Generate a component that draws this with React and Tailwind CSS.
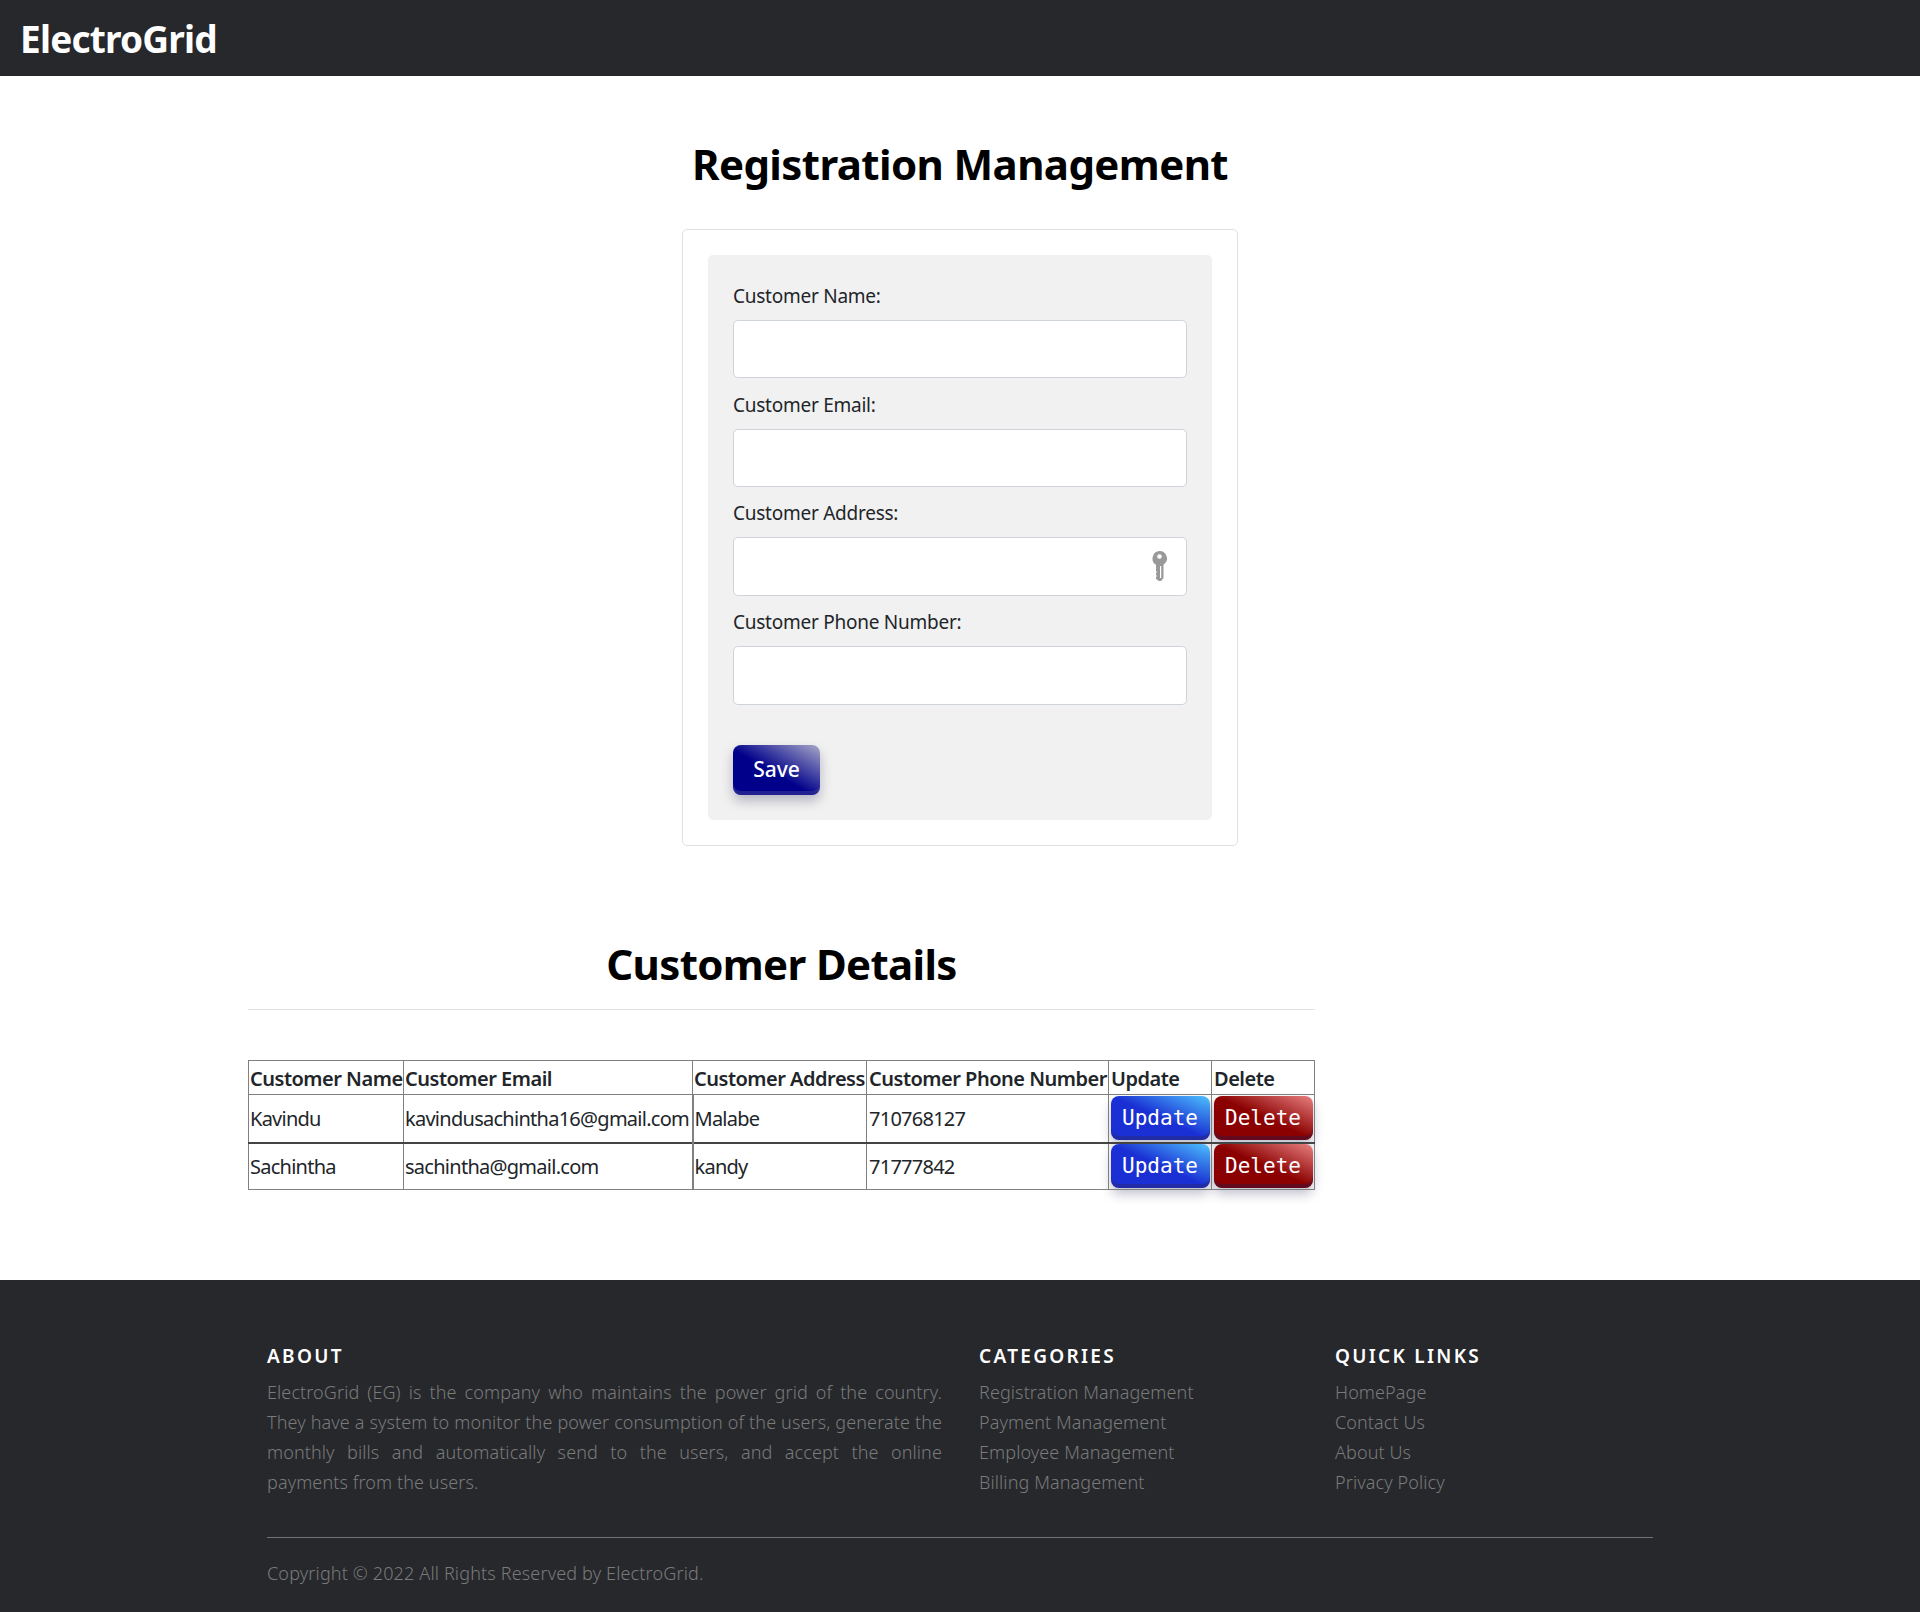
const columns = [
  { label: 'Customer Name', width: 'w-[155px]', pad: 'pl-[1px]' },
  { label: 'Customer Email', width: 'w-[289px]', pad: 'pl-[1px]' },
  { label: 'Customer Address', width: 'w-[174px]', pad: 'pl-[1px]' },
  { label: 'Customer Phone Number', width: 'w-[242px]', pad: 'pl-[2px]' },
  { label: 'Update', width: 'w-[103px]', pad: 'pl-[2px]' },
  { label: 'Delete', width: 'w-[103px]', pad: 'pl-[2px]' },
];

const customers = [
  { name: 'Kavindu', email: 'kavindusachintha16@gmail.com', address: 'Malabe', phone: '710768127' },
  { name: 'Sachintha', email: 'sachintha@gmail.com', address: 'kandy', phone: '71777842' },
];

const categories = ['Registration Management', 'Payment Management', 'Employee Management', 'Billing Management'];
const quickLinks = ['HomePage', 'Contact Us', 'About Us', 'Privacy Policy'];

function Field({ label, icon }) {
  return (
    <div className="mb-[12.35px]">
      <label className="block h-[28px] leading-[28px] mb-[10px] text-[19px] tracking-[-0.25px] text-[#212529]">{label}</label>
      <div className="relative">
        <input type="text" className="block w-full h-[58.4px] bg-white border border-[#ced4da] rounded-[5px]" />
        {icon && (
          <svg viewBox="0 0 15 30" className="absolute right-[20px] top-[14px] w-[15px] h-[30px]" fill="#999">
            <path fillRule="evenodd" d="M7.5 0a7.5 7.5 0 0 1 4 13.8V27l-2.5 3H7l-3-2v-2l1-1-1-1v-2l1-1-1-1v-6.2A7.5 7.5 0 0 1 7.5 0zm0 3.2a2.3 2.3 0 1 0 0 4.6 2.3 2.3 0 0 0 0-4.6zM8 15v12h1.2V15z" />
          </svg>
        )}
      </div>
    </div>
  );
}

function FooterColumn({ title, items, className }) {
  return (
    <div className={className}>
      <h6 className="text-[19px] leading-[22px] font-semibold tracking-[2.3px] text-white mb-[10px]">{title}</h6>
      <ul>
        {items.map((item) => (
          <li key={item} className="h-[30px] leading-[30px] text-[18px] font-light tracking-[0.1px] text-[#7a7a7a]">{item}</li>
        ))}
      </ul>
    </div>
  );
}

export default function App() {
  return (
    <div className="w-full min-h-[1612px] bg-white font-['Noto_Sans',sans-serif] text-[#212529]">
      <nav className="h-[76px] bg-[#26282c] flex items-center pl-[20px] pt-[2px]">
        <span className="text-[37px] font-bold tracking-[-0.8px] text-white">ElectroGrid</span>
      </nav>

      <h1 className="mt-[60px] h-[55px] leading-[55px] text-center text-[42px] font-bold tracking-[-0.6px] text-black">Registration Management</h1>

      <div className="mt-[38px] mx-auto w-[556px] h-[617px] p-[25px] bg-white border border-[#dee2e6] rounded-[5px]">
        <form className="h-full px-[25px] pt-[27px] bg-[#f1f1f1] rounded-[5px]">
          <Field label="Customer Name:" />
          <Field label="Customer Email:" />
          <Field label="Customer Address:" icon />
          <Field label="Customer Phone Number:" />
          <button type="button" className="mt-[28px] w-[87px] h-[50px] rounded-[8px] text-[21px] font-medium text-white bg-[linear-gradient(to_top_right,#00008b_45%,#a8a8c8)] shadow-[inset_0_-4px_0_rgba(70,70,150,0.45),0_6px_12px_rgba(0,0,60,0.25)]">Save</button>
        </form>
      </div>

      <div className="ml-[248px] w-[1067px]">
        <h1 className="mt-[90px] h-[55px] leading-[55px] text-center text-[42px] font-bold tracking-[-0.65px] text-black">Customer Details</h1>
        <hr className="mt-[18px] border-[#e2e2e2]" />
        <table className="mt-[50px] w-[1066px] table-fixed border-collapse text-[20px]">
          <thead>
            <tr className="h-[34px]">
              {columns.map((col) => (
                <th key={col.label} className={`${col.width} ${col.pad} pt-[2px] border border-[#808080] text-left font-semibold leading-[24px] tracking-[-0.5px] whitespace-nowrap overflow-hidden`}>{col.label}</th>
              ))}
            </tr>
          </thead>
          <tbody>
            {customers.map((row, i) => (
              <tr key={row.name} className={i === 0 ? 'h-[48px] border-b-2 border-[#444]' : 'h-[47px]'}>
                <td className="border-x border-b border-[#808080] pl-[1px] pt-[2px] tracking-[-0.75px]">{row.name}</td>
                <td className="border-l border-r-2 border-b border-[#808080] pl-[1px] pt-[2px] tracking-[-0.73px] whitespace-nowrap">{row.email}</td>
                <td className="border-x border-b border-[#808080] pl-[1px] pt-[2px] tracking-[-0.75px]">{row.address}</td>
                <td className="border-x border-b border-[#808080] pl-[2px] pt-[2px] tracking-[-0.75px]">{row.phone}</td>
                <td className="border-x border-b border-[#808080] p-0 text-center">
                  <button type="button" className="block mx-auto w-[99px] h-[44px] rounded-[8px] font-['DejaVu_Sans_Mono',monospace] text-[21px] text-white bg-[linear-gradient(to_top_right,#1a30d4_50%,#4fc3ff)] shadow-[inset_0_-4px_0_rgba(40,40,120,0.5),0_6px_12px_rgba(0,0,60,0.25)]">Update</button>
                </td>
                <td className="border-x border-b border-[#808080] p-0 text-center">
                  <button type="button" className="block mx-auto w-[99px] h-[44px] rounded-[8px] font-['DejaVu_Sans_Mono',monospace] text-[21px] text-white bg-[linear-gradient(to_top_right,#8b0000_50%,#e88080)] shadow-[inset_0_-4px_0_rgba(60,20,60,0.5),0_6px_12px_rgba(0,0,60,0.25)]">Delete</button>
                </td>
              </tr>
            ))}
          </tbody>
        </table>
      </div>

      <footer className="mt-[90px] h-[332px] bg-[#26282c] px-[267px] pt-[65px]">
        <div className="flex">
          <div className="w-[675px]">
            <h6 className="text-[19px] leading-[22px] font-semibold tracking-[2.3px] text-white mb-[10px]">ABOUT</h6>
            <p className="text-[18px] leading-[30px] font-light tracking-[0.1px] text-[#7a7a7a] text-justify">
              ElectroGrid (EG) is the company who maintains the power grid of the country. They have a system to monitor the power consumption of the users, generate the monthly bills and automatically send to the users, and accept the online payments from the users.
            </p>
          </div>
          <FooterColumn title="CATEGORIES" items={categories} className="ml-[37px] w-[356px]" />
          <FooterColumn title="QUICK LINKS" items={quickLinks} />
        </div>
        <hr className="mt-[40px] border-[#737373]" />
        <p className="mt-[20px] text-[18px] leading-[30px] font-light tracking-[0.15px] text-[#7a7a7a]">Copyright © 2022 All Rights Reserved by ElectroGrid.</p>
      </footer>
    </div>
  );
}
